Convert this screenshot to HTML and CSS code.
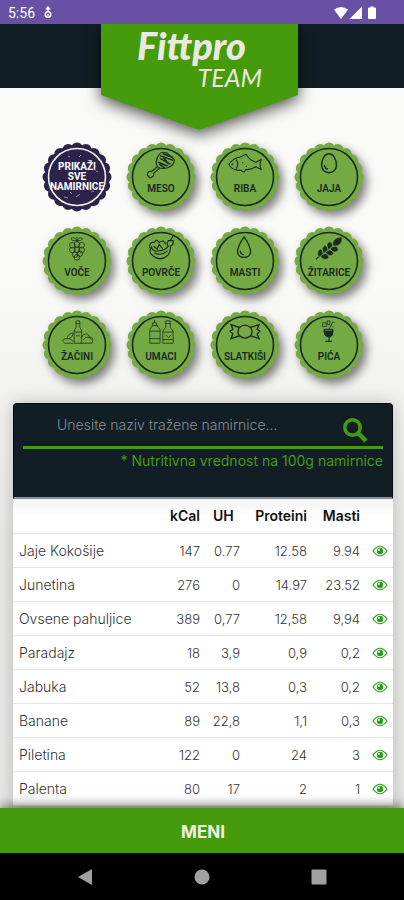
FILE: index.html
```html
<!DOCTYPE html>
<html lang="sr-Latn">
<head>
<meta charset="utf-8">
<meta name="viewport" content="width=device-width, initial-scale=1">
<title>Fittpro Team</title>
<link rel="stylesheet" href="styles.css">
</head>
<body>
<svg class="defs" aria-hidden="true">
  <symbol id="seal" viewBox="-35 -35 70 70">
    <circle r="31" fill="currentColor"/>
    <circle r="28.500" fill="none" stroke="currentColor" stroke-width="12" stroke-linecap="round" pathLength="20" stroke-dasharray="0 1"/>
    <circle class="ring" r="28.500" fill="none" stroke-width="1.600"/>
  </symbol>
  <symbol id="eye" viewBox="0 0 16 12">
    <path d="M1 6Q8-3.500 15 6Q8 15.500 1 6Z" fill="none" stroke="currentColor" stroke-width="1.200"/>
    <circle cx="8" cy="6" r="3.200" fill="currentColor"/>
    <circle cx="6.800" cy="4.800" r="1.100" fill="#fff"/>
  </symbol>
</svg>
<div class="app">
  <div class="status">
    <span>5:56</span>
    <svg width="10" height="14" viewBox="0 0 10 14" fill="none" stroke="currentColor" stroke-width="1.400"><circle cx="5" cy="8.500" r="2.800"/><path d="M5 1v5M3 3.500L5 1l2 2.500M5 8v4"/></svg>
    <svg class="signals" width="46" height="14" viewBox="0 0 46 14" fill="currentColor"><path d="M1 3.500Q8-1.500 15 3.500L8 13Z"/><path d="M29 0.500V13H16.500Z"/><path d="M37.500 1.500V0.500h3v1h1.500q1 0 1 1v9.500q0 1-1 1h-6q-1 0-1-1V2.500q0-1 1-1Z"/></svg>
  </div>
  <header class="header">
    <div class="flag">
      <svg class="flag-shape" viewBox="0 0 197 106" aria-hidden="true"><path d="M0 0H197V71L98.500 106L0 71Z" fill="#459b0b"/></svg>
      <h1 class="logo"><span class="logo-name">Fittpro</span><span class="logo-team">TEAM</span></h1>
    </div>
  </header>
  <main class="content">
    <nav class="badges" aria-label="Kategorije">
      <button class="badge all"><svg class="seal"><use href="#seal"/></svg>
        <svg class="specks" viewBox="-35 -35 70 70" fill="none" stroke="#aaa5b8" stroke-width=".8"><path d="M-18-13l3 1M-9-21l2 1M2-20l2-2M13-17l2 2M-21 12l3-1M-13 20l4 1M3 17l-4 3M14 15l3-1M19-6l2 1M-2-15l3 1M20 9l-2 2M-7 15l2 2"/></svg>
        <span class="label">PRIKAŽI<br>SVE<br>NAMIRNICE</span></button>
      <button class="badge"><svg class="seal"><use href="#seal"/></svg>
        <svg class="icon" viewBox="0 0 36 30"><path d="M16 4Q18 0 24 2L32 9Q33 15 25 18Q19 20 14 17Q11 10 16 4ZM14 17L8 22Q4 21 4 24Q2 26 5 27Q5 30 8 28Q11 27 10 24L17 18"/><path d="M17 5L31 10M17 8L28 14M15 12L25 16M20 3L31 7M16 14L22 18M20 6l6 8" stroke-width="1.600"/></svg><span class="label">MESO</span></button>
      <button class="badge"><svg class="seal"><use href="#seal"/></svg>
        <svg class="icon" viewBox="0 0 38 30"><path d="M1 14Q6 7 14 6L20 3L24 8Q27 11 31 12L37 9Q35 14 37 20L31 17Q25 21 20 20L18 23L14 21Q4 21 1 14ZM9 9Q13 14 9 19M4 14h2M16 12l1 1M20 16l1 1"/></svg><span class="label">RIBA</span></button>
      <button class="badge"><svg class="seal"><use href="#seal"/></svg>
        <svg class="icon" viewBox="0 0 36 30"><path d="M18 3C23 3 26 10 26 15C26 26 10 26 10 15C10 10 13 3 18 3ZM13 15Q14 20 17 19" stroke-width="1.500"/></svg><span class="label">JAJA</span></button>
      <button class="badge"><svg class="seal"><use href="#seal"/></svg>
        <svg class="icon thin" viewBox="0 0 36 30"><circle cx="13" cy="11" r="3"/><circle cx="18" cy="10" r="3"/><circle cx="23" cy="11" r="3"/><circle cx="13" cy="16" r="3"/><circle cx="18" cy="16" r="3"/><circle cx="23" cy="16" r="3"/><circle cx="16" cy="21" r="3"/><circle cx="21" cy="20" r="3"/><circle cx="18" cy="24" r="3"/><path d="M18 7V2M18 6Q11 7 12 3Q16 2 18 6Q21 1 24 4Q23 7 18 6"/></svg><span class="label">VOČE</span></button>
      <button class="badge"><svg class="seal"><use href="#seal"/></svg>
        <svg class="icon" viewBox="0 0 36 30"><path d="M8 13Q4 18 9 22Q17 29 25 22Q29 17 28 12Q32 11 31 6L26 6Q23 10 26 12Q21 18 12 17Q8 16 8 13ZM6 14Q5 7 11 8Q13 3 16 8Q21 4 23 10M10 12l4 3l2-5l4 5M28 6l3-5M11 19Q18 23 25 17"/></svg><span class="label">POVRČE</span></button>
      <button class="badge"><svg class="seal"><use href="#seal"/></svg>
        <svg class="icon" viewBox="0 0 36 30"><path d="M17 2Q24 12 24 18C24 26 10 26 10 18Q10 12 17 2ZM13 17Q13 21 17 21" stroke-width="1.400"/></svg><span class="label">MASTI</span></button>
      <button class="badge"><svg class="seal"><use href="#seal"/></svg>
        <svg class="icon" viewBox="0 0 36 30"><path d="M4 26L29 5"/><path d="M7 24Q4 17 9 15Q14 18 10 22ZM12 20Q9 13 14 11Q19 14 15 18ZM17 16Q14 9 19 7Q24 10 20 14ZM9 23Q14 29 18 24Q16 18 11 21ZM14 19Q19 25 23 20Q21 14 16 17ZM19 15Q24 21 28 16Q27 10 21 13ZM22 11Q21 3 32 2Q33 11 24 12Z" fill="#172b20" stroke="#75a944" stroke-width=".7"/></svg><span class="label">ŽITARICE</span></button>
      <button class="badge"><svg class="seal"><use href="#seal"/></svg>
        <svg class="icon thin" viewBox="0 0 36 30"><path d="M15 26V13Q15 11 17 9V2h4v7Q23 11 23 13V26ZM17 5h4M15 14h8M17 18h4M22 26H34Q37 20 31 19Q30 14 25 17L22 20M25 22Q29 17 34 22M14 26H5Q0 22 6 21Q11 20 14 24M7 21Q9 15 14 15Q14 19 10 21"/></svg><span class="label">ŽAČINI</span></button>
      <button class="badge"><svg class="seal"><use href="#seal"/></svg>
        <svg class="icon thin" viewBox="0 0 36 30"><path d="M6 26V11L9 7V4h4v3l4 4V26ZM8 7h7M6 13h11M6 21h11M11 4V1M20 26V13L23 9V2h5v7l3 4V26ZM23 5h5M20 14h11M20 22h11M23 17l3 3l3-3"/></svg><span class="label">UMACI</span></button>
      <button class="badge"><svg class="seal"><use href="#seal"/></svg>
        <svg class="icon" viewBox="0 0 36 30"><path d="M12 9Q18 4 24 9L33 6L31 11L34 13L31 16L33 21L24 18Q18 23 12 18L3 21L5 16L2 13L5 11L3 6ZM12 9Q9 14 12 18M24 9Q27 14 24 18" stroke-width="1.400"/></svg><span class="label">SLATKIŠI</span></button>
      <button class="badge"><svg class="seal"><use href="#seal"/></svg>
        <svg class="icon" viewBox="0 0 36 30"><path d="M13 11H22Q23 18 18 19Q12 18 13 11ZM18 19V24M14 24H21"/><path d="M13 13h9q0 5-4 6q-5-1-5-6Z" fill="#172b20"/><path d="M18 11L22 3l2 1M11 4h4v4h-4ZM16 2h3v4h-3ZM21 7l2 2" stroke-width=".8"/></svg><span class="label">PIĆA</span></button>
    </nav>
    <section class="card">
      <form class="search">
        <div class="search-row">
          <input class="search-input" type="text" aria-label="Naziv namirnice" placeholder="Unesite naziv tražene namirnice...">
          <button class="search-button" type="button" aria-label="Traži"><svg width="26" height="26" viewBox="0 0 26 26" fill="none" stroke="currentColor"><circle cx="10.500" cy="10.500" r="7.700" stroke-width="3.600"/><path d="M16.500 16.500L24 24" stroke-width="4.400"/></svg></button>
        </div>
        <p class="note">* Nutritivna vrednost na 100g namirnice</p>
      </form>
      <table class="foods">
        <colgroup><col><col class="c-kcal"><col class="c-uh"><col class="c-protein"><col class="c-fat"><col class="c-view"></colgroup>
        <thead><tr><th></th><th>kCal</th><th class="uh">UH</th><th>Proteini</th><th>Masti</th><th></th></tr></thead>
        <tbody>
          <tr><td>Jaje Kokošije</td><td>147</td><td>0.77</td><td>12.58</td><td>9.94</td><td><button class="view" aria-label="Prikaži"><svg><use href="#eye"/></svg></button></td></tr>
          <tr><td>Junetina</td><td>276</td><td>0</td><td>14.97</td><td>23.52</td><td><button class="view" aria-label="Prikaži"><svg><use href="#eye"/></svg></button></td></tr>
          <tr><td>Ovsene pahuljice</td><td>389</td><td>0,77</td><td>12,58</td><td>9,94</td><td><button class="view" aria-label="Prikaži"><svg><use href="#eye"/></svg></button></td></tr>
          <tr><td>Paradajz</td><td>18</td><td>3,9</td><td>0,9</td><td>0,2</td><td><button class="view" aria-label="Prikaži"><svg><use href="#eye"/></svg></button></td></tr>
          <tr><td>Jabuka</td><td>52</td><td>13,8</td><td>0,3</td><td>0,2</td><td><button class="view" aria-label="Prikaži"><svg><use href="#eye"/></svg></button></td></tr>
          <tr><td>Banane</td><td>89</td><td>22,8</td><td>1,1</td><td>0,3</td><td><button class="view" aria-label="Prikaži"><svg><use href="#eye"/></svg></button></td></tr>
          <tr><td>Piletina</td><td>122</td><td>0</td><td>24</td><td>3</td><td><button class="view" aria-label="Prikaži"><svg><use href="#eye"/></svg></button></td></tr>
          <tr><td>Palenta</td><td>80</td><td>17</td><td>2</td><td>1</td><td><button class="view" aria-label="Prikaži"><svg><use href="#eye"/></svg></button></td></tr>
        </tbody>
      </table>
    </section>
  </main>
  <button class="menu">MENI</button>
  <nav class="system" aria-label="Sistem">
    <button aria-label="Nazad"><svg viewBox="0 0 16 16"><path d="M15 0V16L1 8Z"/></svg></button>
    <button aria-label="Početna"><svg viewBox="0 0 16 16"><circle cx="8" cy="8" r="7.500"/></svg></button>
    <button aria-label="Pregled"><svg viewBox="0 0 16 16"><rect x=".5" y=".5" width="15" height="15" rx="1"/></svg></button>
  </nav>
</div>
</body>
</html>
```
FILE: styles.css
```css
* { box-sizing: border-box; }
body { margin: 0; font-family: Inter, "Open Sans", sans-serif; }
button { border: 0; padding: 0; background: none; font: inherit; color: inherit; }
.defs { position: absolute; width: 0; height: 0; }

.app { display: flex; flex-direction: column; height: 100vh; background: linear-gradient(#fafaf8 30%, #e9e9e7 60%); }

.status { display: flex; align-items: center; gap: 8px; height: 24px; padding: 2px 25px 0 8px; background: #6850a5; color: #fff; font: 14px Roboto, sans-serif; flex: none; }
.signals { margin-left: auto; }

.header { display: flex; justify-content: center; height: 64px; padding-right: 5px; background: #111e25; flex: none; position: relative; z-index: 2; }
.flag { position: relative; width: 197px; }
.flag-shape { position: absolute; top: 0; left: 0; width: 197px; height: 106px; filter: drop-shadow(0 4px 8px rgba(0, 0, 0, .7)); clip-path: inset(0 -30px -30px -30px); }
.logo { position: relative; display: flex; flex-direction: column; margin: 0; padding: 1px 36px 0; color: #e9e9df; font-family: Lato, sans-serif; font-style: italic; }
.logo-name { font-size: 38px; line-height: 40px; font-weight: 900; }
.logo-team { align-self: flex-end; font-size: 25px; line-height: 25px; font-weight: 400; }

.content { flex: 1; min-height: 0; overflow: hidden auto; scrollbar-width: none; padding: 54px 11px 0 13px; }
.badges { display: grid; grid-template-columns: repeat(4, 70px); gap: 14px; justify-content: center; }
.badge { position: relative; display: flex; flex-direction: column; align-items: center; width: 70px; height: 70px; padding-top: 9px; gap: 4px; color: #172b20; font: 600 10px/12px Roboto, sans-serif; }
.seal { position: absolute; inset: 0; width: 70px; height: 70px; color: #75a944; stroke: #172b20; filter: drop-shadow(4px 5px 5px rgba(0, 0, 0, .5)); }
.icon { position: relative; width: 34px; height: 28px; flex: none; fill: none; stroke: #172b20; stroke-width: 1.2; }
.thin { stroke-width: .8; }
.label { position: relative; }
.all { justify-content: center; padding-top: 0; color: #fff; line-height: 10px; font-weight: 700; }
.all .seal { color: #2b2349; stroke: #f2f0ea; filter: none; }
.specks { position: absolute; inset: 0; width: 70px; height: 70px; }

.card { margin-top: 23px; border-radius: 4px 4px 0 0; box-shadow: 0 0 18px rgba(0, 0, 0, .22); }
.search { height: 96px; padding: 6px 9px 0; background: #111e25; border: 1px solid #050b10; border-bottom: 2px solid #8b9095; border-radius: 4px 4px 0 0; }
.search-row { display: flex; align-items: center; height: 39px; padding: 0 15px 0 34px; border-bottom: 3px solid #459b0b; }
.search-input { flex: 1; min-width: 0; padding: 0; height: 28px; margin-bottom: 8px; border: 0; outline: 0; background: none; color: #fff; font: 300 14px Inter, sans-serif; }
.search-input::placeholder { color: #8a8f93; opacity: 1; }
.search-button { display: flex; margin-top: 4px; color: #459b0b; }
.note { margin: 2px 0 0; color: #459b0b; font-size: 14px; line-height: 20px; text-align: right; }

.foods { width: 100%; table-layout: fixed; border-collapse: separate; border-spacing: 0; background: #fff; color: #333; font-size: 13px; }
.c-kcal, .c-fat { width: 53px; }
.c-uh { width: 40px; }
.c-protein { width: 67px; }
.c-view { width: 27px; }
.foods th, .foods td { height: 34px; padding: 0 6px; border-bottom: 1px solid #e4e6e7; line-height: 20px; text-align: right; white-space: nowrap; font-weight: 300; }
.foods th { height: 35px; padding: 0 6px 0 0; color: #111; font-size: 14px; font-weight: 600; background: linear-gradient(#f3f3f3, #fff 50%); }
.foods .uh { padding-left: 7px; text-align: left; }
.foods td:first-child { text-align: left; font-size: 14px; }
.view { display: flex; color: #2c9a1c; }
.view svg { width: 16px; height: 12px; }

.menu { height: 45px; flex: none; background: #459b0b; color: #eef3e2; font-size: 17px; font-weight: 700; padding: 3px 0 0 2px; position: relative; z-index: 2; box-shadow: 0 -3px 10px rgba(0, 0, 0, .5); }
.system { display: flex; justify-content: center; gap: 101px; height: 47px; flex: none; align-items: center; background: #000; position: relative; z-index: 3; }
.system button { display: flex; }
.system svg { width: 16px; height: 16px; fill: #a0a0a0; }
```
